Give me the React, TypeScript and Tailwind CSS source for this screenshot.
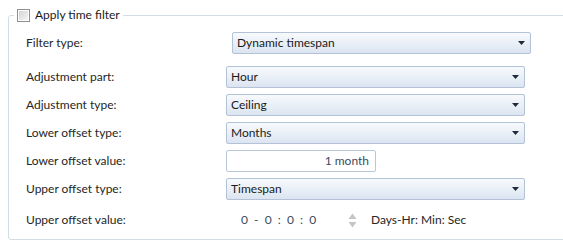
import React from 'react';

const font = { fontFamily: 'Lato, "Open Sans", sans-serif' };

function Select({ value, shift = false }: { value: string; shift?: boolean }) {
    return (
        <div
            className={`flex h-[22px] w-[299px] items-center justify-between rounded-[2px] border border-[#b3c2d6] bg-gradient-to-b from-[#f7f9fc] via-[#eaf0f7] to-[#dbe4f0] pl-[4px] pr-[5px] text-[12px] text-[#1a1a1a] ${shift ? 'ml-[6px]' : ''}`}
        >
            <span>{value}</span>
            <svg width="7" height="4" viewBox="0 0 7 4">
                <path d="M0 0 L7 0 L3.5 4 Z" fill="#1f2a3a" />
            </svg>
        </div>
    );
}

function Row({ label, children, className = '' }: { label: string; children: React.ReactNode; className?: string }) {
    return (
        <div className={`flex h-[22px] items-center ${className}`}>
            <div className="w-[217px] pl-[17px] text-[12px] text-[#262626]">{label}</div>
            {children}
        </div>
    );
}

export default function App() {
    return (
        <div className="h-[249px] w-[563px] overflow-hidden bg-white" style={font}>
            <fieldset className="ml-[8px] mt-[6px] h-[234px] w-[620px] rounded-[3px] border border-[#d3dde4] pb-0">
                <legend className="ml-[5px] flex items-center px-[3px]">
                    <span className="mr-[5px] flex h-[13px] w-[13px] items-center justify-center border border-[#8f8f8f] bg-white">
                        <span className="h-[9px] w-[9px] bg-gradient-to-br from-[#d4d4d4] to-[#f4f4f4]" />
                    </span>
                    <span className="text-[12px] text-[#1a1a1a]">Apply time filter</span>
                </legend>
                <div className="mt-[8px] flex flex-col gap-[6px]">
                    <Row label="Filter type:" className="mb-[6px]">
                        <Select value="Dynamic timespan" shift />
                    </Row>
                    <Row label="Adjustment part:">
                        <Select value="Hour" />
                    </Row>
                    <Row label="Adjustment type:">
                        <Select value="Ceiling" />
                    </Row>
                    <Row label="Lower offset type:">
                        <Select value="Months" />
                    </Row>
                    <Row label="Lower offset value:">
                        <div className="flex h-[22px] w-[150px] items-center justify-end rounded-[2px] border border-[#b9c8d9] bg-white pr-[6px] text-[12px] text-[#3b4b60]">
                            1 month
                        </div>
                    </Row>
                    <Row label="Upper offset type:">
                        <Select value="Timespan" />
                    </Row>
                    <Row label="Upper offset value:" className="mt-[3px]">
                        <div className="flex items-center text-[12px]">
                            <span className="w-[122px] whitespace-pre pl-[15px] text-[#3b4b60]">0  -  0  :  0  :  0</span>
                            <svg width="9" height="17" viewBox="0 0 9 17" className="mr-[14px]">
                                <path d="M0.5 7 L4.5 1.5 L8.5 7 Z" fill="#c5c5c5" />
                                <path d="M0.5 10 L4.5 15.5 L8.5 10 Z" fill="#c5c5c5" />
                            </svg>
                            <span className="text-[#262626]">Days-Hr: Min: Sec</span>
                        </div>
                    </Row>
                </div>
            </fieldset>
        </div>
    );
}
